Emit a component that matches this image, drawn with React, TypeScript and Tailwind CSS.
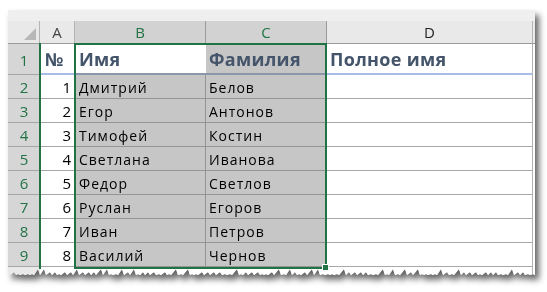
import React from "react";

const people = [
  ["1", "Дмитрий", "Белов"],
  ["2", "Егор", "Антонов"],
  ["3", "Тимофей", "Костин"],
  ["4", "Светлана", "Иванова"],
  ["5", "Федор", "Светлов"],
  ["6", "Руслан", "Егоров"],
  ["7", "Иван", "Петров"],
  ["8", "Василий", "Чернов"],
];

// jagged bottom edge of the "torn" screenshot
function tornClip(width: number, height: number) {
  const pts: string[] = ["0px 0px", `${width}px 0px`];
  let x = width;
  let i = 0;
  while (x > 0) {
    const r = Math.abs(Math.sin(i * 12.9898 + 78.233) * 43758.5453) % 1;
    const spike = r > 0.72 ? 6 : r > 0.4 ? 3 : 1;
    pts.push(`${x}px ${height - 1}px`);
    pts.push(`${x - 2}px ${height - 1 - spike}px`);
    x -= 4 + Math.round(r * 3);
    i++;
  }
  pts.push(`0px ${height - 1}px`);
  return `polygon(${pts.join(",")})`;
}

const cols = "grid grid-cols-[32px_35px_131px_121px_206px_2px]";

function ColHeader() {
  return (
    <div className={`${cols} h-[23px] border-b border-[#9b9b9b] text-[15px] leading-[22px]`}>
      <div className="relative bg-[#e9e9e9] border-r border-[#b4b4b4]">
        <div className="absolute right-[3px] bottom-[3px] w-0 h-0 border-l-[12px] border-l-transparent border-b-[12px] border-b-[#b8b8b8]" />
      </div>
      <div className="bg-[#e9e9e9] border-r border-[#b4b4b4] text-center text-[#444]">A</div>
      <div className="bg-[#d2d2d2] border-r border-[#9b9b9b] text-center text-[#217346]">B</div>
      <div className="bg-[#d2d2d2] border-r border-[#9b9b9b] text-center text-[#217346]">C</div>
      <div className="bg-[#e9e9e9] border-r border-[#b4b4b4] text-center text-[#222]">D</div>
      <div className="bg-[#e9e9e9]" />
    </div>
  );
}

function TitleRow() {
  return (
    <div className={`${cols} h-[31px] text-[18px] font-bold leading-none text-[#44546a] tracking-[0.3px]`}>
      <div className="flex items-end justify-center pb-[6px] bg-[#d6d6d6] border-b border-[#a6a6a6] text-[15px] font-normal text-[#217346] tracking-normal">
        1
      </div>
      <div className="flex items-end pl-[5px] pb-[5px] bg-white border-b-2 border-[#a7bde4]">№</div>
      <div className="flex items-end pl-[4px] pb-[5px] bg-white border-b-2 border-[#8c97ab]">Имя</div>
      <div className="flex items-end pl-[3px] pb-[5px] bg-[#c6c6c6] border-b-2 border-[#8c97ab]">Фамилия</div>
      <div className="flex items-end pl-[3px] pb-[5px] bg-white border-b-2 border-r border-[#a7bde4] border-r-[#b4b4b4]">
        Полное имя
      </div>
      <div className="bg-white" />
    </div>
  );
}

function BodyRow({ n, first, last }: { n: number; first: string; last: string }) {
  return (
    <div className={`${cols} h-[24px] text-[14px] leading-none text-black tracking-[1px]`}>
      <div className="flex items-end justify-center pb-[3px] bg-[#d6d6d6] border-b border-[#a6a6a6] text-[15px] text-[#217346] tracking-normal">
        {n + 1}
      </div>
      <div className="flex items-end justify-end pr-[4px] pb-[3px] bg-white border-b border-[#a8a8a8] text-[15px] tracking-normal">
        {n}
      </div>
      <div className="flex items-end pl-[4px] pb-[3px] bg-[#c6c6c6] border-b border-r border-[#959595]">{first}</div>
      <div className="flex items-end pl-[3px] pb-[3px] bg-[#c6c6c6] border-b border-[#959595]">{last}</div>
      <div className="bg-white border-b border-r border-[#a8a8a8] border-r-[#b4b4b4]" />
      <div className="bg-white" />
    </div>
  );
}

export default function App() {
  return (
    <div className="w-[547px] h-[292px] bg-white overflow-hidden font-['Open_Sans',sans-serif]">
      <div className="pt-[10px] pl-[8px]">
        <div className="w-[527px] drop-shadow-[4px_5px_3px_rgba(0,0,0,0.6)]">
          <div className="relative h-[266px] bg-white" style={{ clipPath: tornClip(527, 266) }}>
            <div className="h-[11px] bg-[#efefef]" />
            <ColHeader />
            <TitleRow />
            {people.map(([n, first, last]) => (
              <BodyRow key={n} n={Number(n)} first={first} last={last} />
            ))}
            <div className={`${cols} h-[24px]`}>
              <div className="bg-[#e9e9e9]" />
              <div className="bg-white" />
              <div className="bg-white" />
              <div className="bg-white" />
              <div className="bg-white border-r border-[#b4b4b4]" />
              <div className="bg-white" />
            </div>

            {/* selection outlines */}
            <div className="absolute left-[31px] top-[33px] w-[2px] h-[226px] bg-[#217346]" />
            <div className="absolute left-[66px] top-[33px] w-[253px] h-[226px] border-2 border-[#217346]" />
            <div className="absolute left-[314px] top-[254px] w-[7px] h-[7px] bg-[#217346] border border-white" />
          </div>
        </div>
      </div>
    </div>
  );
}
